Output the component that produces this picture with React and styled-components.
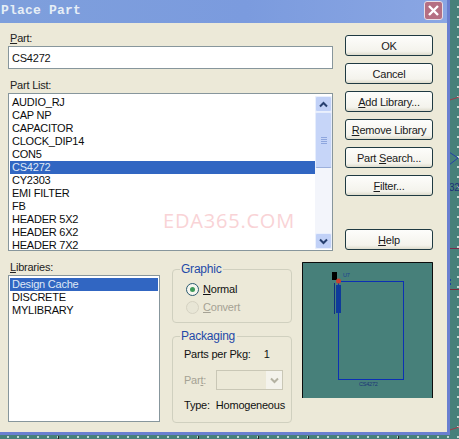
import React from 'react';
import styled, { createGlobalStyle } from 'styled-components';

const partList = ['AUDIO_RJ', 'CAP NP', 'CAPACITOR', 'CLOCK_DIP14', 'CON5', 'CS4272', 'CY2303', 'EMI FILTER', 'FB', 'HEADER 5X2', 'HEADER 6X2', 'HEADER 7X2'];
const libraries = ['Design Cache', 'DISCRETE', 'MYLIBRARY'];

const Global = createGlobalStyle`
  html, body { margin: 0; padding: 0; background: #47807a; }
  * { box-sizing: border-box; }
`;

const Desktop = styled.div`
  position: relative;
  width: 459px;
  height: 439px;
  overflow: hidden;
  background-color: #47807a;
  background-image: radial-gradient(circle at center, #c4dad6 0 0.7px, transparent 1px);
  background-size: 10px 10px;
  background-position: 3px 2px;
  font-family: "Liberation Sans", Arial, sans-serif;
  font-size: 11px;
  letter-spacing: -0.22px;
  color: #111;
`;

const Window = styled.div`
  position: absolute;
  left: 0;
  top: 0;
  width: 450px;
  height: 435px;
  display: flex;
  flex-direction: column;
  background: #ece9d8;
  border-right: 3px solid #6a7fd0;
  border-bottom: 3px solid #6a7fd0;
`;

const TitleBar = styled.div`
  height: 23px;
  flex: none;
  display: flex;
  align-items: center;
  justify-content: space-between;
  padding: 0 4px 2px 1px;
  background: linear-gradient(90deg, #7e9fdc 0%, #7b9bde 55%, #8aa6e3 100%);
`;

const Title = styled.span`
  font-family: "Liberation Mono", monospace;
  font-weight: bold;
  font-size: 13px;
  letter-spacing: 0.2px;
  color: #e6eef6;
`;

const CloseButton = styled.div`
  width: 19px;
  height: 19px;
  display: flex;
  align-items: center;
  justify-content: center;
  border: 1px solid #e8dfe6;
  border-radius: 3px;
  background: #b56f82;
`;

const Body = styled.div`
  flex: 1;
  display: flex;
  flex-direction: column;
  padding: 8px 14px 0 8px;
`;

const TopArea = styled.div`
  display: flex;
  justify-content: space-between;
`;

const PartColumn = styled.div`
  position: relative;
  width: 325px;
  display: flex;
  flex-direction: column;
`;

const FieldLabel = styled.label`
  display: block;
  height: 15px;
  line-height: 14px;
  padding-left: ${p => (p.$flush ? 0 : 2)}px;
  color: ${p => (p.$disabled ? '#a5a294' : '#222')};
  u { text-underline-offset: 1px; }
`;

const TextInput = styled.div`
  height: 23px;
  margin-bottom: 9px;
  padding: 3px 0 0 3px;
  background: #fff;
  border: 1px solid #87969c;
  line-height: 16px;
`;

const ListFrame = styled.div`
  display: flex;
  width: ${p => p.$width}px;
  height: ${p => p.$height}px;
  background: #fff;
  border: 1px solid #87969c;
  padding: 2px 0 1px 1px;
  overflow: hidden;
`;

const Rows = styled.div`
  flex: 1;
  min-width: 0;
  padding-right: ${p => (p.$inset ? 1 : 0)}px;
`;

const Row = styled.div`
  height: 13px;
  line-height: 13px;
  padding-left: 2px;
  white-space: nowrap;
  color: ${p => (p.$selected ? '#dfe8f6' : '#0c0c0c')};
  background: ${p => (p.$selected ? '#3166c2' : 'transparent')};
`;

const Scrollbar = styled.div`
  width: 17px;
  flex: none;
  display: flex;
  flex-direction: column;
  background: #f3f5fb;
`;

const ScrollButton = styled.div`
  height: 16px;
  flex: none;
  display: flex;
  align-items: center;
  justify-content: center;
  background: #c1d1f7;
  border: 1px solid #eaf0fd;
  border-radius: 2px;
`;

const ScrollTrack = styled.div`
  flex: 1;
`;

const ScrollThumb = styled.div`
  height: 56px;
  display: flex;
  flex-direction: column;
  align-items: center;
  justify-content: center;
  gap: 1px;
  background: #c6d5f8;
  border: 1px solid #e6edfc;
  border-bottom-color: #9cb0dc;
  border-radius: 2px;
  i { width: 6px; height: 1px; background: #8ea6de; }
`;

const ButtonColumn = styled.div`
  width: 88px;
  padding-top: 4px;
  display: flex;
  flex-direction: column;
  gap: 7px;
`;

const Button = styled.div`
  height: 21px;
  margin-top: ${p => p.$offset || 0}px;
  display: flex;
  align-items: center;
  justify-content: center;
  border: 1px solid #1f3a42;
  border-radius: 3px;
  background: linear-gradient(180deg, #fdfdfb 0%, #f4f3ec 80%, #dedccd 100%);
  color: #1a1a1a;
  u { text-underline-offset: 1px; }
`;

const BottomArea = styled.div`
  display: flex;
  margin-top: 9px;
`;

const LibraryColumn = styled.div`
  width: 152px;
  margin-right: 12px;
`;

const GroupColumn = styled.div`
  width: 121px;
  margin-right: 10px;
  padding-top: 9px;
  display: flex;
  flex-direction: column;
  gap: 13px;
`;

const Group = styled.div`
  position: relative;
  height: ${p => p.$height}px;
  border: 1px solid #d0d0bf;
  border-radius: 4px;
  padding: ${p => p.$pad}px 0 0 ${p => p.$left}px;
`;

const GroupTitle = styled.span`
  position: absolute;
  left: 7px;
  top: -8px;
  padding: 0 2px 0 1px;
  background: #ece9d8;
  line-height: 14px;
  font-size: 12px;
  color: #1f4aa8;
`;

const RadioRow = styled.div`
  display: flex;
  align-items: center;
  gap: 4px;
  height: 18px;
  color: ${p => (p.$disabled ? '#a5a294' : '#111')};
  u { text-underline-offset: 1px; }
`;

const Radio = styled.span`
  width: 13px;
  height: 13px;
  display: flex;
  align-items: center;
  justify-content: center;
  border-radius: 50%;
  border: 1px solid ${p => (p.$disabled ? '#d5d2c2' : '#2a5a70')};
  background: ${p => (p.$disabled ? '#e8e6d6' : '#f6f6ef')};
  i { width: 5px; height: 5px; border-radius: 50%; background: #3e9a5a; }
`;

const InfoRow = styled.div`
  height: ${p => p.$height || 17}px;
  display: flex;
  align-items: center;
  gap: ${p => p.$gap || 0}px;
  color: #111;
  white-space: nowrap;
`;

const PartSelect = styled.div`
  width: 67px;
  height: 20px;
  display: flex;
  justify-content: flex-end;
  border: 1px solid #c9c7b6;
  background: #ece9d8;
  margin-left: 10px;
`;

const SelectArrow = styled.div`
  width: 16px;
  display: flex;
  align-items: center;
  justify-content: center;
  background: #f4f3ec;
`;

const Preview = styled.svg`
  flex: none;
  display: block;
  width: 131px;
  height: 136px;
  margin-top: 2px;
`;

const Watermark = styled.div`
  position: absolute;
  left: 155px;
  top: 176px;
  font-family: "Open Sans", "Liberation Sans", sans-serif;
  font-size: 20px;
  letter-spacing: 0.8px;
  color: #f9d3d6;
  white-space: nowrap;
`;

const CanvasMarks = styled.svg`
  position: absolute;
  left: 0;
  top: 0;
  width: 459px;
  height: 439px;
`;

const ArrowIcon = ({ up, color = '#27406f' }) => (
  <svg width="9" height="7" viewBox="0 0 9 7">
    <path d={up ? 'M1 5.5 L4.5 2 L8 5.5' : 'M1 1.5 L4.5 5 L8 1.5'} fill="none" stroke={color} strokeWidth="2" />
  </svg>
);

export default function App() {
  return (
    <Desktop>
      <Global />
      <CanvasMarks viewBox="0 0 459 439">
        <path d="M450 100 L459 97" stroke="#a03a4a" />
        <path d="M449 152 L458 158 L449 165" stroke="#2440a8" fill="none" />
        <path d="M450 248.500 H459" stroke="#7a2a4a" />
        <path d="M450 279 V281 M450 283 V285" stroke="#1c3fa0" strokeWidth="2" />
        <path d="M450 289.500 H459" stroke="#7a2a3a" />
        <path d="M450 430 L459 427" stroke="#a03a4a" />
        <path d="M58.500 436 V439 M198.500 436 V439 M258.500 436 V439 M308.500 436 V439 M398.500 436 V439" stroke="#222" />
        <text x="449" y="191" fontSize="10" fontFamily="Liberation Sans" fill="#1c2f78">32</text>
      </CanvasMarks>
      <Window>
        <TitleBar>
          <Title>Place Part</Title>
          <CloseButton>
            <svg width="13" height="13" viewBox="0 0 13 13">
              <path d="M2 2 L11 11 M11 2 L2 11" stroke="#fff" strokeWidth="2.4" />
            </svg>
          </CloseButton>
        </TitleBar>
        <Body>
          <TopArea>
            <PartColumn>
              <FieldLabel><u>P</u>art:</FieldLabel>
              <TextInput>CS4272</TextInput>
              <FieldLabel>Part List:</FieldLabel>
              <ListFrame $width={325} $height={158}>
                <Rows>
                  {partList.map(name => (
                    <Row key={name} $selected={name === 'CS4272'}>{name}</Row>
                  ))}
                </Rows>
                <Scrollbar>
                  <ScrollButton><ArrowIcon up /></ScrollButton>
                  <ScrollThumb><i /><i /><i /><i /></ScrollThumb>
                  <ScrollTrack />
                  <ScrollButton><ArrowIcon /></ScrollButton>
                </Scrollbar>
              </ListFrame>
              <Watermark>EDA365.COM</Watermark>
            </PartColumn>
            <ButtonColumn>
              <Button>OK</Button>
              <Button>Cancel</Button>
              <Button><span><u>A</u>dd Library...</span></Button>
              <Button><span><u>R</u>emove Library</span></Button>
              <Button><span>Part <u>S</u>earch...</span></Button>
              <Button><span><u>F</u>ilter...</span></Button>
              <Button $offset={26}><span><u>H</u>elp</span></Button>
            </ButtonColumn>
          </TopArea>
          <BottomArea>
            <LibraryColumn>
              <FieldLabel><u>L</u>ibraries:</FieldLabel>
              <ListFrame $width={152} $height={147}>
                <Rows $inset>
                  {libraries.map(name => (
                    <Row key={name} $selected={name === 'Design Cache'}>{name}</Row>
                  ))}
                </Rows>
              </ListFrame>
            </LibraryColumn>
            <GroupColumn>
              <Group $height={54} $pad={10} $left={13}>
                <GroupTitle>Graphic</GroupTitle>
                <RadioRow><Radio><i /></Radio><span><u>N</u>ormal</span></RadioRow>
                <RadioRow $disabled><Radio $disabled /><span><u>C</u>onvert</span></RadioRow>
              </Group>
              <Group $height={87} $pad={8} $left={11}>
                <GroupTitle>Packaging</GroupTitle>
                <InfoRow $gap={13}><span>Parts per Pkg:</span><span>1</span></InfoRow>
                <InfoRow $height={36}>
                  <FieldLabel $disabled $flush as="span">Par<u>t</u>:</FieldLabel>
                  <PartSelect>
                    <SelectArrow><ArrowIcon color="#b4b2a2" /></SelectArrow>
                  </PartSelect>
                </InfoRow>
                <InfoRow $height={14} $gap={6}><span>Type:</span><span>Homogeneous</span></InfoRow>
              </Group>
            </GroupColumn>
            <Preview viewBox="0 0 131 136">
              <rect width="131" height="136" fill="#47807a" />
              <path d="M0.500 136 V0.500 H130.500 V136" fill="none" stroke="#0c0c0c" />
              <rect x="30" y="10" width="5" height="8" fill="#000" />
              <text x="41" y="15" fontSize="5.500" fontFamily="Liberation Sans" fill="#1c3f90">U7</text>
              <rect x="36.500" y="19.500" width="65" height="98" fill="none" stroke="#0c30b4" />
              <rect x="34" y="23" width="5" height="28" fill="#0f3a9a" />
              <path d="M32.500 21 V52" stroke="#0f2f80" />
              <circle cx="36.500" cy="19" r="2.500" fill="#c84030" />
              <text x="57" y="124" fontSize="5.500" fontFamily="Liberation Sans" fill="#1c3578">CS4272</text>
            </Preview>
          </BottomArea>
        </Body>
      </Window>
    </Desktop>
  );
}
